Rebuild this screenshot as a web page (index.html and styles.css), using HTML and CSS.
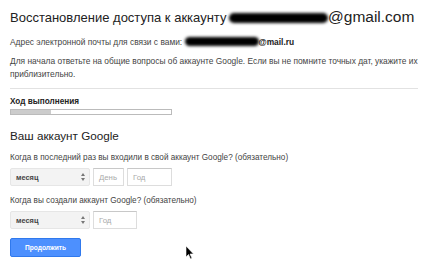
FILE: index.html
```html
<!DOCTYPE html>
<html lang="ru">
  <head>
    <meta charset="UTF-8" />
    <title>Восстановление доступа</title>
    <link rel="stylesheet" href="styles.css">
  </head>
  <body>
    <div class="page">
      <h1 class="title">Восстановление доступа к аккаунту <span class="blot blot-title"></span><span class="domain">@gmail.com</span></h1>
      <p class="contact">Адрес электронной почты для связи с вами: <span class="blot blot-mail"></span><b>@mail.ru</b></p>
      <p class="intro">Для начала ответьте на общие вопросы об аккаунте Google. Если вы не помните точных дат, укажите их приблизительно.</p>
      <hr class="rule" />

      <div class="progress-label">Ход выполнения</div>
      <div class="progress"><div class="progress-fill" style="width: 25%"></div></div>

      <h2 class="section">Ваш аккаунт Google</h2>

      <div class="question">Когда в последний раз вы входили в свой аккаунт Google? (обязательно)</div>
      <div class="row">
        <div class="select">месяц<span class="arrows"></span></div>
        <div class="field day">День</div>
        <div class="field year">Год</div>
      </div>

      <div class="question">Когда вы создали аккаунт Google? (обязательно)</div>
      <div class="row">
        <div class="select">месяц<span class="arrows"></span></div>
        <div class="field year short">Год</div>
      </div>

      <div class="actions">
        <button class="btn" type="button">Продолжить</button>
        <svg class="cursor" width="10" height="14" viewBox="0 0 10 14">
          <path d="M1 0 L1 11 L3.5 8.5 L5.5 13 L7 12.3 L5 8 L8.5 8 Z" fill="#000" stroke="#fff" stroke-width="0.6" />
        </svg>
      </div>
    </div>
  </body>
</html>
```

FILE: styles.css
```css
body {
  margin: 0;
  background: #fff;
  font-family: "Liberation Sans", Arial, sans-serif;
  color: #333;
}
.page {
  padding: 7px 6px 0 10px;
}
.title {
  font-size: 13px;
  font-weight: normal;
  color: #222;
  margin: 0 0 8px;
  white-space: nowrap;
  line-height: 20px;
}
.domain {
  font-size: 15.5px;
}
.blot {
  display: inline-block;
  background: #000;
  border-radius: 8px;
  filter: blur(1.5px);
  vertical-align: middle;
}
.blot-title {
  width: 99px;
  height: 10px;
  margin: -2px 0 0 -1px;
}
.blot-mail {
  width: 74px;
  height: 9px;
  margin: -2px 0 0 0;
}
.contact {
  font-size: 8.4px;
  margin: 0 0 7px;
  color: #444;
  line-height: 12px;
}
.contact b {
  color: #222;
}
.intro {
  font-size: 8.4px;
  color: #444;
  margin: 0;
  line-height: 13px;
}
.rule {
  border: none;
  border-top: 1px solid #e2e2e2;
  margin: 7px 0 8px;
}
.progress-label {
  font-size: 8.2px;
  font-weight: bold;
  color: #222;
  line-height: 10px;
}
.progress {
  width: 160px;
  height: 4px;
  border: 1px solid #bbb;
  margin-top: 2px;
}
.progress-fill {
  height: 100%;
  background: #ccc;
}
.section {
  font-size: 11.7px;
  font-weight: normal;
  color: #222;
  margin: 14px 0 9px;
  line-height: 14px;
}
.question {
  font-size: 8.2px;
  color: #444;
  line-height: 11px;
  margin-bottom: 5px;
}
.row {
  display: flex;
  gap: 3px;
  margin-bottom: 9px;
}
.select {
  width: 80px;
  height: 18px;
  box-sizing: border-box;
  background: #f3f3f3;
  border: 1px solid #e6e6e6;
  border-radius: 2px;
  font-size: 7.4px;
  font-weight: bold;
  color: #444;
  padding-left: 5px;
  display: flex;
  align-items: center;
  justify-content: space-between;
}
.arrows {
  width: 0;
  margin-right: 6px;
  position: relative;
  height: 8px;
}
.arrows::before,
.arrows::after {
  content: "";
  position: absolute;
  left: -2px;
  border-left: 2px solid transparent;
  border-right: 2px solid transparent;
}
.arrows::before {
  top: 0;
  border-bottom: 3px solid #777;
}
.arrows::after {
  bottom: 0;
  border-top: 3px solid #777;
}
.field {
  height: 18px;
  box-sizing: border-box;
  border: 1px solid #ddd;
  border-top-color: #c8c8c8;
  font-size: 7.8px;
  color: #aaa;
  padding-left: 5px;
  display: flex;
  align-items: center;
}
.day {
  width: 31px;
}
.year {
  width: 45px;
}
.year.short {
  width: 44px;
}
.actions {
  display: flex;
  align-items: flex-start;
  margin-top: 4px;
}
.btn {
  width: 71px;
  height: 19px;
  background: #4d90fe;
  border: 1px solid #3079ed;
  border-radius: 2px;
  color: #fff;
  font-family: "Liberation Sans", Arial, sans-serif;
  font-size: 6.6px;
  font-weight: bold;
  padding: 0;
}
.cursor {
  margin: 8px 0 0 104px;
}
```
